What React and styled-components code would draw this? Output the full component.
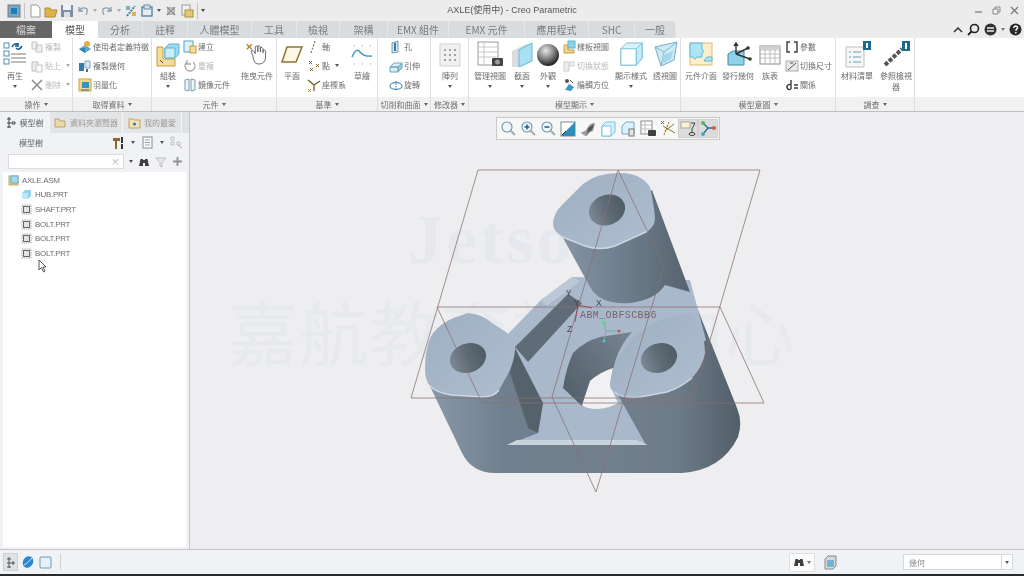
import React from 'react';
import styled, {createGlobalStyle} from 'styled-components';

const GlobalStyle = createGlobalStyle`
    html, body {
        margin: 0;
        padding: 0;
        background: #ececec;
    }
    #root {
        width: 1024px;
        height: 576px;
        overflow: hidden;
    }
    svg {
        flex: none;
    }
`;

const FONT = `"Noto Sans CJK TC", "Liberation Sans", sans-serif`;

const Window = styled.div`
    width: 1024px;
    height: 576px;
    display: flex;
    flex-direction: column;
    position: relative;
    overflow: hidden;
    font-family: ${FONT};
    color: #666;
    background: #ececec;
    filter: blur(0.3px);
`;

const TitleBar = styled.div`
    height: 21px;
    display: grid;
    grid-template-columns: 1fr auto 1fr;
    align-items: center;
    background: #ececec;
`;

const QuickAccess = styled.div`
    display: flex;
    align-items: center;
    gap: 2px;
    padding-left: 7px;
`;

const QuickDivider = styled.span`
    width: 1px;
    height: 16px;
    margin: 0 1px;
    background: #c4c4c4;
`;

const Title = styled.div`
    font-family: "Liberation Sans", "Noto Sans CJK TC", sans-serif;
    font-size: 9px;
    line-height: 21px;
    color: #555;
`;

const WindowControls = styled.div`
    display: flex;
    justify-content: flex-end;
    align-items: center;
    gap: 9px;
    padding-right: 5px;
`;

const TabRow = styled.div`
    height: 17px;
    display: flex;
    align-items: stretch;
    background: #ececec;
`;

const Tab = styled.div`
    width: ${props => props.$w}px;
    display: flex;
    align-items: center;
    justify-content: center;
    font-size: 10px;
    color: ${props => props.$file ? '#d8d8d8' : props.$active ? '#555' : '#7c7c7c'};
    background: ${props => props.$file ? '#666' : props.$active ? '#fff' : '#d9dcde'};
    border-right: ${props => props.$active || props.$file ? 'none' : '1px solid #e6e6e6'};
    box-sizing: border-box;
`;

const HelpIcons = styled.div`
    margin-left: auto;
    display: flex;
    align-items: center;
    gap: 4px;
    padding-right: 2px;
`;

const Ribbon = styled.div`
    height: 74px;
    display: flex;
    background: #fff;
    border-bottom: 1px solid #bdbdbd;
    box-sizing: border-box;
`;

const Group = styled.div`
    width: ${props => props.$w}px;
    flex: ${props => props.$fill ? 1 : 'none'};
    display: flex;
    flex-direction: column;
    border-right: ${props => props.$fill ? 'none' : '1px solid #dedede'};
    box-sizing: border-box;
`;

const GroupBody = styled.div`
    height: 59px;
    display: flex;
    padding-left: ${props => props.$pl || 0}px;
    gap: ${props => props.$gap || 2}px;
`;

const GroupLabel = styled.div`
    height: 14px;
    display: flex;
    align-items: center;
    justify-content: center;
    gap: 3px;
    font-size: 8px;
    color: #707070;
    background: #f1f1f1;
`;

const Large = styled.div`
    width: ${props => props.$w}px;
    flex: none;
    display: flex;
    flex-direction: column;
    align-items: center;
`;

const LargeIcon = styled.div`
    height: 27px;
    margin-top: 3px;
    display: flex;
    align-items: center;
    justify-content: center;
`;

const LargeText = styled.div`
    margin-top: 2px;
    font-size: 8px;
    line-height: 11px;
    text-align: center;
    white-space: ${props => props.$wrap ? 'normal' : 'nowrap'};
    color: #6c6c6c;
`;

const Col = styled.div`
    width: ${props => props.$w}px;
    flex: none;
    display: flex;
    flex-direction: column;
    margin-top: -1px;
`;

const SmallRow = styled.div`
    height: 19px;
    display: flex;
    align-items: center;
    gap: 1px;
    font-size: 8px;
    white-space: nowrap;
    color: ${props => props.$off ? '#b9b9b9' : '#6c6c6c'};
`;

const Caret = styled.span`
    display: inline-block;
    flex: none;
    width: 0;
    height: 0;
    border-left: 2.5px solid transparent;
    border-right: 2.5px solid transparent;
    border-top: 3px solid ${props => props.$c || '#555'};
    margin: ${props => props.$m || '0'};
`;

const Main = styled.div`
    flex: 1;
    min-height: 0;
    display: flex;
`;

const Panel = styled.div`
    width: 190px;
    flex: none;
    display: flex;
    flex-direction: column;
    background: #f0f2f5;
    border-right: 1px solid #c6c6c6;
    box-sizing: border-box;
    padding-bottom: 2px;
`;

const PanelTabs = styled.div`
    height: 21px;
    display: flex;
    background: #dfe1e3;
    padding-right: 7px;
`;

const PanelTab = styled.div`
    width: ${props => props.$w}px;
    display: flex;
    align-items: center;
    justify-content: center;
    gap: 3px;
    font-size: 8px;
    color: ${props => props.$active ? '#666' : '#9a9a9a'};
    background: ${props => props.$active ? '#f0f2f5' : '#e3e4e6'};
    border-right: 1px solid #f4f4f4;
    box-sizing: border-box;
`;

const PanelHeader = styled.div`
    height: 19px;
    display: flex;
    align-items: center;
    justify-content: space-between;
    padding: 0 6px 0 19px;
    font-size: 8px;
    color: #666;
`;

const ToolCluster = styled.div`
    display: flex;
    align-items: center;
    gap: ${props => props.$gap || 4}px;
`;

const SearchRow = styled.div`
    height: 19px;
    display: flex;
    align-items: center;
    justify-content: space-between;
    padding: 0 6px 0 8px;
`;

const SearchInput = styled.div`
    width: 116px;
    height: 15px;
    display: flex;
    align-items: center;
    justify-content: flex-end;
    padding-right: 3px;
    background: #fff;
    border: 1px solid #dcdcdc;
    box-sizing: border-box;
    font-size: 9px;
    color: #a8a8a8;
`;

const Tree = styled.div`
    flex: 1;
    margin: 1px 3px 0;
    padding: 0 0 0 5px;
    background: #fff;
`;

const TreeRow = styled.div`
    height: 14.6px;
    display: flex;
    align-items: center;
    gap: 3px;
    padding-left: ${props => props.$indent || 0}px;
    font-family: "Liberation Sans", sans-serif;
    font-size: 8px;
    letter-spacing: -0.3px;
    color: #6e6e6e;
`;

const TreeList = styled.div`
    padding-top: 1px;
`;

const Canvas = styled.div`
    flex: 1;
    position: relative;
    background: #eeedf0;
    overflow: hidden;
`;

const ModelView = styled.svg`
    display: block;
    position: relative;
    width: 100%;
    height: 100%;
`;

const ViewBar = styled.div`
    position: absolute;
    top: 5px;
    left: 306px;
    height: 23px;
    display: flex;
    align-items: center;
    padding: 0 1px;
    background: #f7f7f7;
    border: 1px solid #c9c9c9;
    box-sizing: border-box;
`;

const ViewButton = styled.div`
    width: 20px;
    height: 19px;
    display: flex;
    align-items: center;
    justify-content: center;
    background: ${props => props.$on ? '#dcdcdc' : 'transparent'};
    box-sizing: border-box;
    border: ${props => props.$on ? '1px solid #cfcfcf' : 'none'};
`;

const WatermarkLatin = styled.div`
    position: absolute;
    left: 218px;
    top: 88px;
    font-family: "Liberation Serif", serif;
    font-weight: 700;
    font-size: 70px;
    line-height: 80px;
    letter-spacing: 3px;
    color: #e5e9ee;
    pointer-events: none;
`;

const WatermarkCjk = styled.div`
    position: absolute;
    left: 38px;
    top: 176px;
    font-family: "Noto Sans CJK TC", sans-serif;
    font-size: 70px;
    line-height: 86px;
    letter-spacing: 1px;
    white-space: nowrap;
    color: #e6eaec;
    pointer-events: none;
`;

const Pointer = styled.svg`
    position: absolute;
    left: 38px;
    top: 259px;
`;

const StatusBar = styled.div`
    height: 24px;
    display: flex;
    align-items: center;
    background: #f0f3f6;
    border-top: 1px solid #c4c4c4;
    border-bottom: 2px solid #2a2a2a;
    box-sizing: content-box;
`;

const StatusLeft = styled.div`
    display: flex;
    align-items: center;
    gap: 3px;
    padding-left: 3px;
`;

const StatusCell = styled.div`
    width: ${props => props.$w}px;
    height: 18px;
    display: flex;
    align-items: center;
    justify-content: center;
    background: ${props => props.$on ? '#dfe1e3' : 'transparent'};
    border: ${props => props.$on ? '1px solid #d0d0d0' : 'none'};
    box-sizing: border-box;
`;

const StatusDivider = styled.span`
    width: 1px;
    height: 16px;
    margin-left: 5px;
    background: #d0d0d0;
`;

const StatusRight = styled.div`
    margin-left: auto;
    display: flex;
    align-items: center;
    padding-right: 11px;
`;

const FindBox = styled.div`
    width: 26px;
    height: 19px;
    display: flex;
    align-items: center;
    justify-content: center;
    gap: 2px;
    background: #fbfbfb;
    border: 1px solid #e0e0e0;
    box-sizing: border-box;
    margin-right: 2px;
`;

const SelectBox = styled.div`
    width: 110px;
    height: 16px;
    display: flex;
    align-items: center;
    justify-content: space-between;
    margin-left: 60px;
    padding-left: 5px;
    font-size: 8px;
    color: #8a8a8a;
    background: #fff;
    border: 1px solid #d8d8d8;
    box-sizing: border-box;
`;

const SelectArrow = styled.div`
    width: 10px;
    height: 100%;
    display: flex;
    align-items: center;
    justify-content: center;
    border-left: 1px solid #d8d8d8;
`;

const I = ({s = 14, w, h, children}) => (
    <svg width={w || s} height={h || s} viewBox={`0 0 ${w || s} ${h || s}`}>{children}</svg>
);

const Binoculars = ({c = '#3f3f3f'}) => (
    <I s={12}>
        <path d="M1 10 L2.5 3 H5 V10 Z M11 10 L9.5 3 H7 V10 Z" fill={c}/>
        <rect x="5" y="4" width="2" height="3" fill={c}/>
    </I>
);

const PartGlyph = () => (
    <I s={11}>
        <rect x="1" y="1" width="9" height="9" fill="none" stroke="#9a9a9a" strokeDasharray="1.4 1"/>
        <rect x="2.5" y="2.5" width="6" height="6" fill="#e4e4e4" stroke="#666"/>
    </I>
);

const Cube = ({size = 28}) => (
    <svg width={size} height={size} viewBox="0 0 28 28">
        <path d="M3 8 L9 2 H25 V18 L19 25 H3 Z" fill="#d9f2fb" stroke="#8fb4c4"/>
        <path d="M3 8 H19 V25 H3 Z" fill="#fff" stroke="#76c3dc"/>
        <path d="M19 8 L25 2 V18 L19 25 Z" fill="#c3ecf8" stroke="#76c3dc"/>
    </svg>
);

const icons = {
    regen: (
        <I w={24} h={25}>
            <rect x="1" y="1" width="5" height="5" fill="none" stroke="#4a8fc0"/>
            <rect x="1" y="9" width="5" height="5" fill="none" stroke="#4a8fc0"/>
            <rect x="1" y="17" width="5" height="5" fill="none" stroke="#4a8fc0"/>
            <path d="M9 5 Q12 0 15 3 M15 1 V4 H12 M19 4 Q16 9 13 6" fill="none" stroke="#1e5f92" strokeWidth="1.6"/>
            <path d="M8 12 H23 M8 16 H23 M8 20 H23" stroke="#7b7b7b"/>
        </I>
    ),
    copy: <I><path d="M2 2 H7 V9 H2 Z M6 5 H12 V12 H6 Z" fill="#f1f1f1" stroke="#c3c3c3"/></I>,
    paste: <I><path d="M2 3 H8 V12 H2 Z" fill="#ececec" stroke="#bdbdbd"/><path d="M6 6 H12 V13 H6 Z" fill="#fafafa" stroke="#c6c6c6"/></I>,
    del: <I><path d="M2 2 L12 12 M12 2 L2 12" stroke="#8a8a8a" strokeWidth="1.5"/></I>,
    udf: <I><path d="M1 9 L7 5 L13 9 L7 13 Z" fill="#5fa6cf"/><circle cx="9" cy="4" r="3" fill="#e1b04a"/><path d="M1 9 L7 13 V8 Z" fill="#2c7fa9"/></I>,
    copyGeom: <I><rect x="1" y="4" width="5" height="8" fill="#2f7da8"/><path d="M7 2 H12 V9 H7 Z" fill="#d6e8f2" stroke="#7ca7bf"/><rect x="8" y="10" width="2" height="3" fill="#666"/></I>,
    shrink: <I><rect x="1" y="1" width="12" height="12" fill="#f0d58a" stroke="#c9a44a"/><rect x="4" y="4" width="7" height="6" fill="#3c92c4"/><path d="M3 12 H11" stroke="#2c6d96"/></I>,
    assembly: (
        <I w={26} h={27}>
            <path d="M2 6 H8 V18 H20 V25 H2 Z" fill="#f3dc9e" stroke="#c79c3a"/>
            <path d="M10 7 L14 3 H24 V13 L20 17 H10 Z" fill="#9cdcf3" stroke="#5eb0cf"/>
            <path d="M10 7 H20 V17 H10 Z" fill="#c7eefa" stroke="#5eb0cf"/>
            <path d="M5 19 L8 22" stroke="#444"/>
        </I>
    ),
    create: <I><rect x="1" y="1" width="9" height="11" fill="#dff1f8" stroke="#5ba1c6"/><rect x="7" y="6" width="6" height="7" fill="#f3dc9e" stroke="#c79c3a"/></I>,
    repeat: <I><path d="M10 3 A5 5 0 1 1 4 3 M4 1 V5 H8" fill="none" stroke="#a9a9a9" strokeWidth="1.3"/></I>,
    mirror: <I><path d="M2 2 L6 1 V13 L2 12 Z M12 2 L8 1 V13 L12 12 Z" fill="#eef6fa" stroke="#7b9cae"/></I>,
    drag: (
        <svg width="24" height="25" viewBox="0 0 28 28">
            <path d="M2 2 L8 8 M8 2 L2 8" stroke="#b8862c" strokeWidth="1.6"/>
            <path d="M9 15 L7 10 Q8 8 10 10 L12 13 V5 Q14 3 15 5 V11 V4 Q17 3 18 5 V11 V6 Q20 5 21 7 V12 V9 Q23 8 24 10 V18 Q23 24 18 25 H14 Q11 24 10 20 Z" fill="#fff" stroke="#555"/>
        </svg>
    ),
    plane: <I w={24} h={22}><path d="M7 3 H22 L16 18 H2 Z" fill="#fbf6e6" stroke="#8c7434" strokeWidth="1.5"/></I>,
    axis: <I><path d="M8 1 L4 13" stroke="#8a7a50" strokeDasharray="2 1.5" strokeWidth="1.3"/></I>,
    point: <I><path d="M2 2 L5 5 M5 2 L2 5 M9 5 L12 8 M12 5 L9 8 M3 9 L6 12 M6 9 L3 12" stroke="#8a6a2a"/></I>,
    csys: <I><path d="M7 7 L1 2 M7 7 L13 3 M7 7 V13" stroke="#6b5a2a" strokeWidth="1.3"/><path d="M1 11 L4 14 M4 11 L1 14" stroke="#b8862c"/></I>,
    sketch: (
        <I w={24} h={24}>
            <path d="M2 13 Q6 3 10 8 T22 12" transform="translate(0 1)" fill="none" stroke="#3b98c4" strokeWidth="1.4"/>
            <path d="M4 3 H5 M12 3 H13 M20 3 H21 M4 21 H5 M12 21 H13 M20 21 H21 M20 13 H21" stroke="#9a9a9a"/>
        </I>
    ),
    hole: <I><path d="M3 3 L9 1 V12 L3 13 Z" fill="#cfe6f1" stroke="#7a9aad"/><rect x="5" y="3" width="2" height="8" fill="#3f7ea3"/></I>,
    extrude: <I><path d="M1 8 L5 4 H13 L9 8 H1 Z M1 8 H9 V13 H1 Z" fill="#d8eef6" stroke="#6ea4bd"/><path d="M9 8 L13 4 V9 L9 13 Z" fill="#96cde2" stroke="#6ea4bd"/></I>,
    revolve: <I><ellipse cx="7" cy="8" rx="6" ry="3.5" fill="none" stroke="#5ba1c6" strokeWidth="1.4"/><path d="M7 3 V13" stroke="#777" strokeDasharray="1.5 1"/></I>,
    pattern: (
        <I w={24} h={26}>
            <rect x="2" y="2" width="20" height="22" fill="#f0f0f0" stroke="#d2d2d2"/>
            {[7, 12, 17].map(x => [8, 13, 18].map(y => <rect key={`${x}-${y}`} x={x - 1} y={y - 1} width="2" height="2" fill="#a4a4a4"/>))}
        </I>
    ),
    manage: (
        <I w={30} h={27}>
            <rect x="3" y="1" width="20" height="23" fill="#fff" stroke="#9a9a9a"/>
            <path d="M3 6 H23 M3 11 H23 M3 16 H23 M9 1 V24" stroke="#c8c8c8"/>
            <rect x="17" y="17" width="11" height="8" rx="1" fill="#444"/>
            <circle cx="22.5" cy="21" r="2.5" fill="#9a9a9a"/>
        </I>
    ),
    section: (
        <I w={22} h={26}>
            <path d="M1 9 L13 3 L21 1 V19 L9 25 H1 Z" fill="#dcdcdc"/>
            <path d="M8 8 L21 1 V19 L8 25 Z" fill="#a9e1f4" stroke="#65bcd8"/>
        </I>
    ),
    appearance: (
        <I w={24} h={24}>
            <defs>
                <radialGradient id="ball" cx="0.4" cy="0.3" r="0.75">
                    <stop offset="0" stopColor="#e8e8e8"/>
                    <stop offset="0.55" stopColor="#777"/>
                    <stop offset="1" stopColor="#111"/>
                </radialGradient>
            </defs>
            <circle cx="12" cy="12" r="11" fill="url(#ball)"/>
        </I>
    ),
    template: <I><path d="M2 5 H6 V10 H12 V13 H2 Z" fill="#f2d98f" stroke="#c49c3c"/><rect x="6" y="1" width="7" height="7" fill="#8fd2ec" stroke="#5eb0cf"/></I>,
    state: <I><rect x="2" y="3" width="5" height="9" fill="#ececec" stroke="#cfcfcf"/><rect x="8" y="3" width="4" height="4" fill="#f2f2f2" stroke="#d2d2d2"/></I>,
    orient: <I><path d="M3 12 L7 6 L12 9 L9 13 Z" fill="#3b98c4"/><circle cx="5" cy="3" r="2" fill="#555"/><path d="M8 2 L11 5" stroke="#4a4a4a"/></I>,
    display: <Cube size={27}/>,
    perspective: (
        <I w={26} h={27}>
            <path d="M3 6 L25 1 L22 19 L9 25 Z" fill="#cfeaf4" stroke="#6eaec6"/>
            <path d="M3 6 L12 11 L25 1 M12 11 L9 25" fill="none" stroke="#7fb9cd"/>
            <path d="M11 14 L21 10 L19 18 L10 23 Z" fill="#a7d8ea"/>
        </I>
    ),
    iface: (
        <I w={26} h={27}>
            <rect x="2" y="2" width="22" height="22" fill="#fbeecb" stroke="#d8bd74"/>
            <path d="M2 2 H14 V8 Q17 10 14 13 V16 H9 Q7 20 5 16 H2 Z" fill="#aee4f5" stroke="#62b9d6"/>
            <path d="M16 20 H24 V16 H19 Q17 18 16 20" fill="#aee4f5" stroke="#62b9d6"/>
        </I>
    ),
    publish: (
        <I w={28} h={27}>
            <path d="M4 13 L9 10 H20 V24 H4 Z" fill="#8fd2ec" stroke="#3e86a8"/>
            <path d="M12 13 V3 M10 5 L12 2 L14 5 M12 13 L24 7 M12 13 L26 18" stroke="#333" strokeWidth="1.4" fill="none"/>
            <circle cx="24" cy="7" r="1.8" fill="#333"/><circle cx="26" cy="18" r="1.8" fill="#333"/>
        </I>
    ),
    family: (
        <I w={22} h={24}>
            <rect x="1" y="3" width="20" height="18" fill="#fff" stroke="#8a8a8a"/>
            <path d="M1 7 H21 M1 11 H21 M1 15 H21 M6 3 V21 M11 3 V21 M16 3 V21" stroke="#bdbdbd"/>
            <rect x="1" y="3" width="20" height="3" fill="#cfcfcf"/>
        </I>
    ),
    param: <I><path d="M5 2 H2 V12 H5 M9 2 H12 V12 H9" fill="none" stroke="#3f3f3f" strokeWidth="1.4"/></I>,
    switchDim: <I><rect x="1" y="2" width="12" height="10" fill="#e8e8e8" stroke="#aaa"/><path d="M3 11 L11 4 M5 4 H8" stroke="#555"/></I>,
    relation: <I><path d="M6 2 V11 M6 11 A2.5 2.5 0 1 1 6 7" fill="none" stroke="#3b3b3b" strokeWidth="1.4"/><path d="M9 7 H13 M9 10 H13" stroke="#3b3b3b" strokeWidth="1.3"/></I>,
    bom: (
        <I w={28} h={27}>
            <path d="M3 6 H21 V26 H3 Z" fill="#f6f6f6" stroke="#c0c0c0"/>
            <path d="M6 11 H8 M10 11 H18 M6 16 H8 M10 16 H18 M6 21 H8 M10 21 H18" stroke="#6b9cb8"/>
            <rect x="20" y="0" width="8" height="9" fill="#1e6a8c"/>
            <rect x="23" y="2" width="2" height="5" fill="#fff"/>
        </I>
    ),
    refView: (
        <I w={28} h={27}>
            <path d="M3 24 L20 8" stroke="#555" strokeWidth="4" strokeDasharray="4 1.5"/>
            <rect x="20" y="0" width="8" height="10" fill="#1e6a8c"/>
            <rect x="23" y="2" width="2" height="6" fill="#fff"/>
        </I>
    ),
};

const glass = (inner) => (
    <I s={17}>
        <circle cx="7" cy="7" r="5" fill="#eef6fa" stroke="#6e93a8" strokeWidth="1.1"/>
        <path d="M10.5 10.5 L15 15" stroke="#a4afb6" strokeWidth="2.2"/>
        {inner}
    </I>
);

const viewIcons = [
    {key: 'refit', icon: glass(null)},
    {key: 'in', icon: glass(<path d="M4.5 7 H9.5 M7 4.5 V9.5" stroke="#245f80" strokeWidth="1.5"/>)},
    {key: 'out', icon: glass(<path d="M4.5 7 H9.5" stroke="#245f80" strokeWidth="1.5"/>)},
    {key: 'repaint', icon: <I s={16}><rect x="1" y="1" width="14" height="14" fill="#fff" stroke="#7a8a94"/><path d="M15 1 V15 H1 Z" fill="#2f8db8"/><path d="M2 14 L6 10" stroke="#333"/></I>},
    {key: 'style', icon: <I s={16}><path d="M1 11 Q6 11 8 6 Q10 2 15 2 L13 10 Q9 11 7 15 Q3 15 1 11 Z" fill="#9b9b9b"/><path d="M8 7 L14 3 L12 9 Q9 10 7 13 Z" fill="#555"/></I>},
    {key: 'named', icon: <I s={16}><path d="M2 5 L6 1 H15 V11 L11 15 H2 Z" fill="#d9f2fb" stroke="#76c3dc"/><path d="M2 5 H11 V15 H2 Z" fill="#fff" stroke="#76c3dc"/></I>},
    {key: 'section', icon: <I s={16}><path d="M2 5 L6 1 H14 V13 H2 Z" fill="#d9f2fb" stroke="#76a9c0"/><rect x="9" y="8" width="5" height="7" fill="#e4e4e4" stroke="#777"/></I>},
    {key: 'manage', icon: <I s={17}><rect x="1" y="1" width="11" height="13" fill="#fff" stroke="#8a8a8a"/><path d="M1 5 H12 M1 9 H12 M5 1 V14" stroke="#bcbcbc"/><rect x="8" y="10" width="8" height="6" rx="1" fill="#3f3f3f"/></I>},
    {key: 'datum', icon: <I s={17}><path d="M9 2 L4 15" stroke="#b8862c" strokeDasharray="2 1" strokeWidth="1.2"/><path d="M3 6 L15 13 M14 4 L5 11" stroke="#8a7438"/><path d="M1 1 L4 4 M4 1 L1 4" stroke="#8a6a2a"/></I>},
    {key: 'annot', on: true, icon: <I s={17}><rect x="1" y="2" width="9" height="6" fill="#fbf3cf" stroke="#a8a8a8"/><path d="M11 3 H15 L12 9 V13" fill="none" stroke="#444"/><ellipse cx="12" cy="14" rx="3" ry="1.5" fill="none" stroke="#444"/></I>},
    {key: 'spin', on: true, icon: <I s={17}><path d="M8 8 L3 3 M8 8 L15 8 M8 8 L3 14" stroke="#2a6c8a" strokeWidth="1.4"/><circle cx="3" cy="3" r="2" fill="#5eb35e"/><circle cx="14" cy="8" r="2" fill="#cf5a4c"/><circle cx="3" cy="14" r="2" fill="#4aa8cf"/></I>},
];

const Big = ({w, icon, label, caret, wrap}) => (
    <Large $w={w}>
        <LargeIcon>{icons[icon]}</LargeIcon>
        <LargeText $wrap={wrap}>{label}</LargeText>
        {caret && <Caret $m="4px 0 0"/>}
    </Large>
);

const Small = ({icon, label, off, caret}) => (
    <SmallRow $off={off}>
        {icons[icon]}
        <span>{label}</span>
        {caret && <Caret $c={off ? '#aaa' : '#555'} $m="0 0 0 4px"/>}
    </SmallRow>
);

const RibbonGroup = ({w, pl, gap, label, children}) => (
    <Group $w={w}>
        <GroupBody $pl={pl} $gap={gap}>{children}</GroupBody>
        <GroupLabel>{label}<Caret $c="#666"/></GroupLabel>
    </Group>
);

const tabs = [
    ['檔案', 52, 'file'], ['模型', 46, 'active'], ['分析', 45], ['註釋', 45], ['人體模型', 64], ['工具', 45],
    ['檢視', 43], ['架構', 48], ['EMX 組件', 61], ['EMX 元件', 76], ['應用程式', 64], ['SHC', 46], ['一般', 41],
];

const parts = ['SHAFT.PRT', 'BOLT.PRT', 'BOLT.PRT', 'BOLT.PRT'];

const PLANE = '#8a6f70';

const Model = () => (
    <ModelView viewBox="190 112 834 437">
        <defs>
            <linearGradient id="bodyFill" gradientUnits="userSpaceOnUse" x1="427" y1="0" x2="742" y2="0">
                <stop offset="0" stopColor="#8999a9"/>
                <stop offset="0.25" stopColor="#707f8d"/>
                <stop offset="0.6" stopColor="#727f8d"/>
                <stop offset="0.8" stopColor="#6c7a87"/>
                <stop offset="1" stopColor="#515e68"/>
            </linearGradient>
            <linearGradient id="lugSide" gradientUnits="userSpaceOnUse" x1="560" y1="0" x2="690" y2="0">
                <stop offset="0" stopColor="#8595a5"/>
                <stop offset="0.55" stopColor="#6c7a88"/>
                <stop offset="1" stopColor="#56636d"/>
            </linearGradient>
            <linearGradient id="lugTop" x1="0" y1="0" x2="1" y2="1">
                <stop offset="0" stopColor="#9fafc2"/>
                <stop offset="1" stopColor="#aebdd0"/>
            </linearGradient>
            <linearGradient id="holeFill" x1="0" y1="0" x2="1" y2="0">
                <stop offset="0" stopColor="#7c8893"/>
                <stop offset="0.5" stopColor="#5e6b76"/>
                <stop offset="1" stopColor="#4f5b65"/>
            </linearGradient>
            <linearGradient id="wallFill" gradientUnits="userSpaceOnUse" x1="563" y1="380" x2="630" y2="335">
                <stop offset="0" stopColor="#56636e"/>
                <stop offset="1" stopColor="#76838f"/>
            </linearGradient>
            <filter id="soft" x="-5%" y="-5%" width="110%" height="110%">
                <feGaussianBlur stdDeviation="0.6"/>
            </filter>
        </defs>

        <g filter="url(#soft)">
            <path d="M427 380 L462 453 Q472 473 495 473 L682 473 Q722 470 738 437 Q743 422 737 408 L690 290 L510 340 Z" fill="url(#bodyFill)"/>
            <path d="M507 335 L541 300 L572 277 L690 280 L706 340 L640 397 L617 393 L646 445 L507 445 L538 433 L543 403 Z" fill="#a9b8cb"/>
            <path d="M507 445 L517 440 L636 440 L648 445 Z" fill="#c8d3de"/>
            <path d="M541 300 L572 277 L580 281 L547 306 Z" fill="#bcc8d6"/>
            <path d="M515 347 L568 294 L582 303 L528 362 Z" fill="#5f6c78"/>
            <path d="M515 348 L543 403 L538 433 L528 428 L510 373 Z" fill="#55626c"/>

            <path d="M562 236 L590 287 Q600 305 630 303 Q655 300 665 285 L690 292 L652 190 Z" fill="url(#lugSide)"/>
            <path d="M553 224 Q553 214 562 205 L583 184 Q597 173 618 173 Q640 172 650 187 Q654 205 655 218 Q655 226 648 231 L615 246 Q600 251 585 246 L565 238 Q553 232 553 224 Z" fill="url(#lugTop)"/>
            <path d="M560 236 L585 246 Q600 251 615 246 L648 231" fill="none" stroke="#ccd7e2" strokeWidth="1.4"/>

            <path d="M563 388 Q566 368 573 353 Q585 341 600 337 L632 332 Q620 345 615 362 L610 382 L588 400 L582 406 Z" fill="url(#wallFill)"/>
            <path d="M582 405 Q586 409 598 409 Q610 408 618 403 L610 385 L613 368 Q600 372 590 381 Z" fill="#f1f1f4"/>

            <path d="M425 370 Q425 345 433 333 Q442 322 456 317 L468 313 Q482 314 492 323 L506 332 Q515 340 515 350 Q514 362 508 374 L499 390 Q494 397 482 397 L452 395 Q436 393 429 385 Q425 378 425 370 Z" fill="url(#lugTop)"/>
            <path d="M429 385 Q436 393 452 395 L482 397 Q494 397 499 390" fill="none" stroke="#ccd7e2" strokeWidth="1.4"/>

            <path d="M610 385 Q611 373 616 362 Q622 349 634 337 Q646 327 661 320 L682 314 Q693 313 699 325 Q705 340 705 353 Q703 366 692 378 Q680 388 667 392 L640 397 Q622 399 615 392 Q610 390 610 385 Z" fill="url(#lugTop)"/>
            <path d="M615 392 Q622 399 640 397 L667 392 Q680 388 692 378" fill="none" stroke="#ccd7e2" strokeWidth="1.4"/>

            <ellipse cx="607" cy="210" rx="18.5" ry="15" transform="rotate(-22 607 210)" fill="url(#holeFill)"/>
            <ellipse cx="468" cy="358" rx="18.5" ry="14.5" transform="rotate(-20 468 358)" fill="url(#holeFill)"/>
            <ellipse cx="659" cy="358" rx="18.5" ry="14.5" transform="rotate(-20 659 358)" fill="url(#holeFill)"/>
        </g>

        <g fill="none" stroke={PLANE} strokeWidth="0.9" opacity="0.85">
            <path d="M478 170 H760 L693 398 H411 Z"/>
            <path d="M437 307 H720 L764 403 H482 Z"/>
            <path d="M618 170 L664 266 L596 492 L552 397 Z"/>
        </g>
        <path d="M578 305 L575 322 M578 305 L592 308" stroke="#8f3b3b" strokeWidth="0.8"/>
        <path d="M606 331 L604 341 M606 331 L619 331 M606 331 L604 323" stroke="#7aa" strokeWidth="0.9"/>
        <circle cx="604" cy="323" r="2" fill="#5fd48a"/>
        <circle cx="604" cy="341" r="1.5" fill="#49c8d8"/>
        <circle cx="619" cy="331" r="1.5" fill="#c94e4e"/>
        <g fontFamily={`"Liberation Sans", sans-serif`} fontSize="8.5" fill="#45454b">
            <text x="566" y="296">Y</text>
            <text x="574" y="306">Y</text>
            <text x="596" y="306">X</text>
            <text x="567" y="332">Z</text>
        </g>
        <text x="580" y="318" fontFamily={`"Liberation Mono", monospace`} fontSize="10" letterSpacing="0.4" fill="#7d5f66">ABM_OBFSCBB6</text>
    </ModelView>
);

export default function App() {
    return (
        <Window>
            <GlobalStyle/>
            <TitleBar>
                <QuickAccess>
                    <I s={14}><rect x="1" y="1" width="12" height="12" fill="#7ba6c4" stroke="#6f7f88"/><rect x="4" y="4" width="6" height="6" fill="#1d7fb8"/></I>
                    <QuickDivider/>
                    <I s={14}><path d="M3 1 H9 L12 4 V13 H3 Z" fill="#fff" stroke="#9a9a9a"/></I>
                    <I s={14}><path d="M1 4 H6 L7 6 H13 L11 13 H1 Z" fill="#e0b24e" stroke="#b28a32"/></I>
                    <I s={14}><rect x="1" y="1" width="12" height="12" fill="#7e8ea0"/><rect x="3" y="1" width="8" height="5" fill="#eef2f5"/><rect x="4" y="8" width="6" height="5" fill="#d9dfe4"/></I>
                    <I s={14}><path d="M3 7 Q6 2 11 5 Q12 8 10 11 M3 3 V7 H7" fill="none" stroke="#8ca0b0" strokeWidth="1.3"/></I>
                    <Caret $c="#aaa" $m="0 1px"/>
                    <I s={14}><path d="M11 7 Q8 2 3 5 Q2 8 4 11 M11 3 V7 H7" fill="none" stroke="#8ca0b0" strokeWidth="1.3"/></I>
                    <Caret $c="#aaa" $m="0 1px"/>
                    <I s={14}><path d="M3 12 L11 2" stroke="#3e86a8" strokeDasharray="2 1" strokeWidth="2"/><rect x="2" y="2" width="4" height="4" fill="#7fb0c8"/><rect x="8" y="8" width="4" height="4" fill="#d7b45a"/></I>
                    <I s={14}><rect x="2" y="3" width="10" height="9" fill="none" stroke="#3e86a8" strokeWidth="1.3"/><rect x="4" y="1" width="6" height="4" fill="#cfe2ec" stroke="#6f8f9f"/></I>
                    <Caret $m="0 1px"/>
                    <I s={14}><path d="M3 3 L11 11 M11 3 L3 11" stroke="#8a8a8a" strokeWidth="1.2"/><rect x="4" y="4" width="6" height="6" fill="none" stroke="#8a8a8a"/></I>
                    <I s={14}><rect x="2" y="1" width="8" height="10" fill="#f2f2f2" stroke="#999"/><rect x="5" y="6" width="8" height="7" fill="#e2c86e" stroke="#a8913e"/></I>
                    <QuickDivider/>
                    <Caret $c="#444"/>
                </QuickAccess>
                <Title>AXLE(使用中) - Creo Parametric</Title>
                <WindowControls>
                    <I s={9}><path d="M1 6 H8" stroke="#777" strokeWidth="1.2"/></I>
                    <I s={9}><path d="M1 3 H6 V8 H1 Z M3 3 V1 H8 V6 H6" fill="none" stroke="#888"/></I>
                    <I s={9}><path d="M1 1 L8 8 M8 1 L1 8" stroke="#777" strokeWidth="1.2"/></I>
                </WindowControls>
            </TitleBar>

            <TabRow>
                {tabs.map(([label, w, kind]) => (
                    <Tab key={label} $w={w} $file={kind === 'file'} $active={kind === 'active'}>{label}</Tab>
                ))}
                <HelpIcons>
                    <I s={10}><path d="M1 7 L5 3 L9 7" fill="none" stroke="#333" strokeWidth="1.5"/></I>
                    <I s={13}><circle cx="7.5" cy="5.5" r="4" fill="none" stroke="#222" strokeWidth="1.6"/><path d="M4.5 8.5 L1 12" stroke="#222" strokeWidth="1.8"/></I>
                    <I s={13}><circle cx="6.5" cy="6.5" r="6" fill="#333"/><path d="M3 5 H10 M3 8 H10" stroke="#eee" strokeWidth="1.4"/></I>
                    <Caret $c="#777"/>
                    <I s={13}><circle cx="6.5" cy="6.5" r="6" fill="#2a2a2a"/><path d="M4.5 5 Q5 3 6.8 3 Q9 3.4 8.4 5.4 Q7 6.3 6.8 7.8 M6.8 9 V10.4" fill="none" stroke="#fff" strokeWidth="1.4"/></I>
                </HelpIcons>
            </TabRow>

            <Ribbon>
                <RibbonGroup w={73} pl={3} gap={3} label="操作">
                    <Big w={24} icon="regen" label="再生" caret/>
                    <Col $w={42}>
                        <Small icon="copy" label="複製" off/>
                        <Small icon="paste" label="貼上" off caret/>
                        <Small icon="del" label="刪除" off caret/>
                    </Col>
                </RibbonGroup>
                <RibbonGroup w={79} pl={5} label="取得資料">
                    <Col $w={72}>
                        <Small icon="udf" label="使用者定義特徵"/>
                        <Small icon="copyGeom" label="複製幾何"/>
                        <Small icon="shrink" label="羽量化"/>
                    </Col>
                </RibbonGroup>
                <RibbonGroup w={125} pl={3} gap={2} label="元件">
                    <Big w={26} icon="assembly" label="組裝" caret/>
                    <Col $w={56}>
                        <Small icon="create" label="建立"/>
                        <Small icon="repeat" label="重複" off/>
                        <Small icon="mirror" label="鏡像元件"/>
                    </Col>
                    <Big w={32} icon="drag" label="拖曳元件"/>
                </RibbonGroup>
                <RibbonGroup w={101} pl={3} gap={3} label="基準">
                    <Big w={24} icon="plane" label="平面"/>
                    <Col $w={40}>
                        <Small icon="axis" label="軸"/>
                        <Small icon="point" label="點" caret/>
                        <Small icon="csys" label="座標系"/>
                    </Col>
                    <Big w={24} icon="sketch" label="草繪"/>
                </RibbonGroup>
                <RibbonGroup w={53} pl={11} label="切削和曲面">
                    <Col $w={40}>
                        <Small icon="hole" label="孔"/>
                        <Small icon="extrude" label="引伸"/>
                        <Small icon="revolve" label="旋轉"/>
                    </Col>
                </RibbonGroup>
                <RibbonGroup w={38} pl={6} label="修改器">
                    <Big w={26} icon="pattern" label="陣列" caret/>
                </RibbonGroup>
                <RibbonGroup w={212} pl={3} gap={2} label="模型顯示">
                    <Big w={36} icon="manage" label="管理視圖" caret/>
                    <Big w={24} icon="section" label="截面" caret/>
                    <Big w={24} icon="appearance" label="外觀" caret/>
                    <Col $w={50}>
                        <Small icon="template" label="樣板視圖"/>
                        <Small icon="state" label="切換狀態" off/>
                        <Small icon="orient" label="編輯方位"/>
                    </Col>
                    <Big w={34} icon="display" label="顯示樣式" caret/>
                    <Big w={30} icon="perspective" label="透視圖"/>
                </RibbonGroup>
                <RibbonGroup w={155} pl={3} gap={3} label="模型意圖">
                    <Big w={34} icon="iface" label="元件介面"/>
                    <Big w={34} icon="publish" label="發行幾何"/>
                    <Big w={24} icon="family" label="族表"/>
                    <Col $w={48}>
                        <Small icon="param" label="參數"/>
                        <Small icon="switchDim" label="切換尺寸"/>
                        <Small icon="relation" label="關係"/>
                    </Col>
                </RibbonGroup>
                <RibbonGroup w={79} pl={4} gap={4} label="調查">
                    <Big w={34} icon="bom" label="材料清單"/>
                    <Big w={36} icon="refView" label="參照檢視器" wrap/>
                </RibbonGroup>
                <Group $fill>
                    <GroupBody/>
                    <GroupLabel/>
                </Group>
            </Ribbon>

            <Main>
                <Panel>
                    <PanelTabs>
                        <PanelTab $w={50} $active>
                            <I s={11}><path d="M2 1 H4 V3 H2 Z M2 5 H4 V7 H2 Z M2 9 H4 V11 H2 Z M6 5 H9 V7 H6 Z" fill="none" stroke="#444"/></I>
                            模型樹
                        </PanelTab>
                        <PanelTab $w={73}>
                            <I s={13}><path d="M1 3 H5 L6 5 H11 V11 H1 Z" fill="#ecd9a8" stroke="#b9a36a"/></I>
                            資料夾瀏覽器
                        </PanelTab>
                        <PanelTab $w={59}>
                            <I s={13}><path d="M1 3 H5 L6 4 H12 V12 H1 Z" fill="#f3e4b8" stroke="#b9a36a"/><circle cx="6.5" cy="8" r="1.6" fill="#2a7fa8"/></I>
                            我的最愛
                        </PanelTab>
                    </PanelTabs>
                    <PanelHeader>
                        模型樹
                        <ToolCluster $gap={6}>
                            <I s={13}><path d="M1 2 H8 V5 H5 V13 H3 V5 H1 Z" fill="#8a6a2c"/><path d="M10 1 V7 M10 8 V13" stroke="#333" strokeWidth="2"/></I>
                            <Caret/>
                            <I s={13}><rect x="2" y="1" width="9" height="11" fill="#fff" stroke="#8a8a8a"/><path d="M4 4 H9 M4 6.5 H9 M4 9 H9" stroke="#8aa0ae"/></I>
                            <Caret/>
                            <I s={13}><path d="M1 1 H4 V4 H1 Z M1 6 H4 V9 H1 Z M7 6 H10 V9 H7 Z" fill="none" stroke="#c0c0c0"/><path d="M8 9 L12 12" stroke="#aaa"/></I>
                        </ToolCluster>
                    </PanelHeader>
                    <SearchRow>
                        <SearchInput>×</SearchInput>
                        <ToolCluster $gap={5}>
                            <Caret/>
                            <Binoculars/>
                            <I s={12}><path d="M1 2 H11 L7 6.5 V11 L5 10 V6.5 Z" fill="#e8e8e8" stroke="#bdbdbd"/></I>
                            <I s={11}><path d="M5.5 1 V10 M1 5.5 H10" stroke="#8f8f8f" strokeWidth="1.8"/></I>
                        </ToolCluster>
                    </SearchRow>
                    <Tree>
                        <TreeList>
                            <TreeRow>
                                <I s={11}><rect x="1" y="1" width="9" height="9" fill="#e6cf8d" stroke="#c2a862"/><rect x="3" y="1" width="7" height="7" fill="#9fd9f0" stroke="#5eb0cf"/></I>
                                AXLE.ASM
                            </TreeRow>
                            <TreeRow $indent={13}>
                                <I s={11}><path d="M1 4 L4 1 H10 V7 L7 10 H1 Z" fill="#8fd2ec"/><path d="M1 4 H7 V10 H1 Z" fill="#bfe8f7"/></I>
                                HUB.PRT
                            </TreeRow>
                            {parts.map((name, i) => (
                                <TreeRow key={`${name}-${i}`} $indent={13}>
                                    <PartGlyph/>
                                    {name}
                                </TreeRow>
                            ))}
                        </TreeList>
                    </Tree>
                </Panel>

                <Canvas>
                    <WatermarkLatin>Jetsoft</WatermarkLatin>
                    <WatermarkCjk>嘉航教育訓練中心</WatermarkCjk>
                    <Model/>
                    <ViewBar>
                        {viewIcons.map(({key, icon, on}) => (
                            <ViewButton key={key} $on={on}>{icon}</ViewButton>
                        ))}
                    </ViewBar>
                </Canvas>
            </Main>

            <StatusBar>
                <StatusLeft>
                    <StatusCell $w={15} $on>
                        <I s={11}><path d="M3 1 H5 V3 H3 Z M3 5 H5 V7 H3 Z M3 9 H5 V11 H3 Z M7 5 H9 V7 H7 Z" fill="none" stroke="#555"/></I>
                    </StatusCell>
                    <StatusCell $w={14}>
                        <I s={14}><ellipse cx="7" cy="7" rx="5" ry="6" transform="rotate(30 7 7)" fill="#2a86cf"/><path d="M3 10 Q7 8 11 3" stroke="#cfe9f8" fill="none"/></I>
                    </StatusCell>
                    <StatusCell $w={14}>
                        <I s={13}><rect x="1" y="1" width="11" height="11" rx="1" fill="#e4f1f8" stroke="#6c9ab4"/></I>
                    </StatusCell>
                    <StatusDivider/>
                </StatusLeft>
                <StatusRight>
                    <FindBox>
                        <Binoculars/>
                        <Caret $c="#777"/>
                    </FindBox>
                    <StatusCell $w={26}>
                        <I s={15}><path d="M2 4 L5 1 H13 V11 L10 14 H2 Z" fill="#d8d8d8" stroke="#888"/><path d="M4 5 H11 V12 H4 Z" fill="#6fb6d6"/></I>
                    </StatusCell>
                    <SelectBox>
                        幾何
                        <SelectArrow><Caret/></SelectArrow>
                    </SelectBox>
                </StatusRight>
            </StatusBar>

            <Pointer width="10" height="14" viewBox="0 0 10 14">
                <path d="M1 1 V11 L3.5 8.5 L5.5 13 L7 12 L5 8 H8 Z" fill="#fff" stroke="#444" strokeWidth="0.9"/>
            </Pointer>
        </Window>
    );
}
